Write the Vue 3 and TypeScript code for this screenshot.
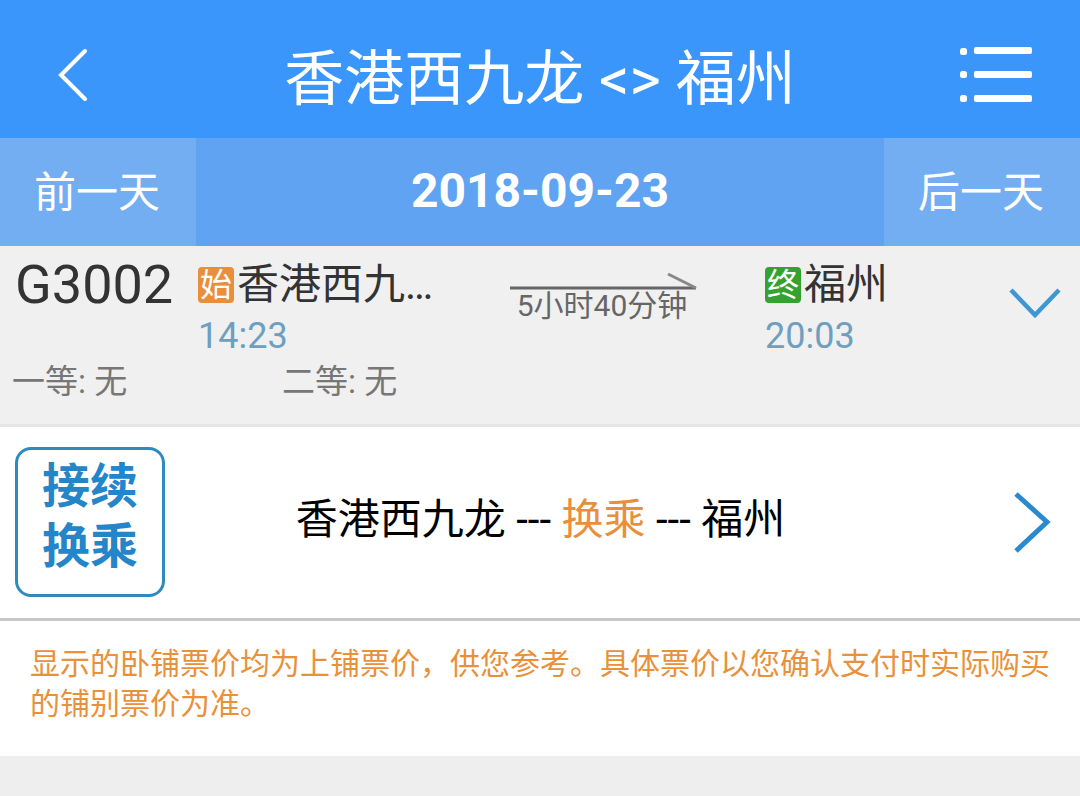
<script setup lang="ts">
const title = '香港西九龙 <> 福州'
const seats = [
  { label: '一等', value: '无' },
  { label: '二等', value: '无' },
]
</script>

<template>
  <div class="page">
    <header class="top">
      <svg class="back" width="32" height="52" viewBox="0 0 32 52" fill="none">
        <path d="M29 2 L5 26 L29 50" stroke="#fff" stroke-width="4" stroke-linecap="round" stroke-linejoin="miter" />
      </svg>
      <h1 class="title">{{ title }}</h1>
      <svg class="menu" width="72" height="56" viewBox="0 0 72 56" fill="#fff">
        <rect x="0" y="1" width="7" height="7" rx="2.5" />
        <rect x="14" y="0" width="58" height="7" rx="2" />
        <rect x="0" y="24" width="7" height="7" rx="2.5" />
        <rect x="14" y="24" width="58" height="7" rx="2" />
        <rect x="0" y="48" width="7" height="7" rx="2.5" />
        <rect x="14" y="48" width="58" height="7" rx="2" />
      </svg>
    </header>

    <nav class="dates">
      <span class="day-btn">前一天</span>
      <strong class="date">2018-09-23</strong>
      <span class="day-btn">后一天</span>
    </nav>

    <section class="train">
      <div class="train-main">
        <span class="train-no">G3002</span>
        <div class="stop stop-from">
          <div class="stop-name">
            <span class="tag tag-start">始</span><span class="name-text">香港西九…</span>
          </div>
          <div class="stop-time">14:23</div>
        </div>
        <div class="duration">
          <svg class="arrow" width="188" height="20" viewBox="0 0 188 20" fill="none">
            <path d="M0 16 H186" stroke="#666" stroke-width="3" />
            <path d="M158 2 L186 16" stroke="#888" stroke-width="3" />
          </svg>
          <span class="duration-text">5小时40分钟</span>
        </div>
        <div class="stop stop-to">
          <div class="stop-name">
            <span class="tag tag-end">终</span><span class="name-text">福州</span>
          </div>
          <div class="stop-time">20:03</div>
        </div>
        <svg class="chevron-down" width="52" height="32" viewBox="0 0 52 32" fill="none">
          <path d="M2 3 L26 28 L50 3" stroke="#3d97d3" stroke-width="4.5" />
        </svg>
      </div>
      <div class="seats">
        <span v-for="s in seats" :key="s.label" class="seat">{{ s.label }}: {{ s.value }}</span>
      </div>
    </section>

    <section class="transfer">
      <div class="badge">接续<br>换乘</div>
      <p class="transfer-text">香港西九龙 --- <span class="accent">换乘</span> --- 福州</p>
      <svg class="chevron-right" width="40" height="64" viewBox="0 0 40 64" fill="none">
        <path d="M4 3 L35 31 L4 60" stroke="#2a8ad0" stroke-width="5" />
      </svg>
    </section>

    <p class="notice">显示的卧铺票价均为上铺票价，供您参考。具体票价以您确认支付时实际购买的铺别票价为准。</p>
  </div>
</template>

<style scoped>
.page {
  width: 1080px;
  height: 796px;
  overflow: hidden;
  background: #eeeeee;
  font-family: Roboto, "Noto Sans CJK SC", sans-serif;
}
.top {
  height: 138px;
  background: #3b96fb;
  display: grid;
  grid-template-columns: 1fr auto 1fr;
  align-items: center;
  padding: 12px 48px 0 56px;
  box-sizing: border-box;
}
.menu {
  justify-self: end;
}
.title {
  margin: -4px 0 0;
  color: #fff;
  font-size: 60px;
  font-weight: 400;
  white-space: nowrap;
  transform: translateX(-4px);
}
.dates {
  height: 108px;
  display: flex;
  align-items: center;
  background: #5fa3f2;
  color: #fff;
}
.day-btn {
  width: 196px;
  height: 100%;
  box-sizing: border-box;
  padding: 0 2px 8px 0;
  display: flex;
  align-items: center;
  justify-content: center;
  background: #73adf2;
  font-size: 42px;
  font-weight: 400;
}
.date {
  flex: 1;
  text-align: center;
  font-size: 48px;
  font-weight: 700;
  padding-bottom: 4px;
}
.train {
  height: 181px;
  box-sizing: border-box;
  background: #f0f0f0;
  border-bottom: 3px solid #e6e6e6;
  padding-top: 6px;
}
.train-main {
  display: flex;
  align-items: flex-start;
  height: 108px;
}
.train-no {
  width: 198px;
  padding-left: 15px;
  box-sizing: border-box;
  font-size: 54px;
  line-height: 66px;
  color: #333;
}
.stop-from {
  width: 312px;
}
.stop-to {
  width: 245px;
}
.stop-name {
  display: flex;
  align-items: center;
  height: 62px;
  color: #333;
  font-size: 42px;
}
.name-text {
  margin-top: -6px;
}
.tag {
  width: 36px;
  height: 36px;
  margin: 4px 3px 0 0;
  border-radius: 4px;
  color: #fff;
  font-size: 32px;
  line-height: 36px;
  text-align: center;
}
.tag-start {
  background: #e98f3c;
}
.tag-end {
  background: #34a22f;
}
.stop-time {
  margin-top: -1px;
  font-size: 36px;
  line-height: 46px;
  color: #6f9fc0;
}
.duration {
  width: 255px;
  position: relative;
  height: 70px;
}
.arrow {
  display: block;
  margin-top: 20px;
}
.duration-text {
  display: block;
  width: 184px;
  margin-top: -3px;
  text-align: center;
  font-size: 30px;
  line-height: 34px;
  color: #666;
  white-space: nowrap;
}
.chevron-down {
  margin: 35px 0 0 -1px;
  flex: none;
}
.seats {
  display: flex;
  padding-left: 12px;
  font-size: 33px;
  line-height: 44px;
  color: #777;
}
.seat {
  width: 270px;
}
.transfer {
  height: 194px;
  box-sizing: border-box;
  background: #fff;
  border-bottom: 3px solid #c8c8c8;
  display: flex;
  align-items: center;
  padding: 0 28px 0 15px;
}
.badge {
  width: 150px;
  height: 150px;
  margin-bottom: 2px;
  box-sizing: border-box;
  border: 3px solid #2e8bbd;
  border-radius: 16px;
  padding-top: 7px;
  color: #2585c9;
  font-size: 48px;
  font-weight: 700;
  line-height: 60px;
  text-align: center;
}
.transfer-text {
  flex: 1;
  margin: 0 0 14px;
  text-align: center;
  color: #000;
  font-size: 42px;
  padding-right: 96px;
}
.accent {
  color: #e98f3c;
}
.chevron-right {
  flex: none;
}
.notice {
  margin: 0;
  height: 135px;
  box-sizing: border-box;
  background: #fff;
  padding: 23px 30px 0;
  color: #e8913a;
  font-size: 30px;
  line-height: 40px;
}
</style>

<style>
html, body {
  margin: 0;
  background: #eeeeee;
}
</style>
